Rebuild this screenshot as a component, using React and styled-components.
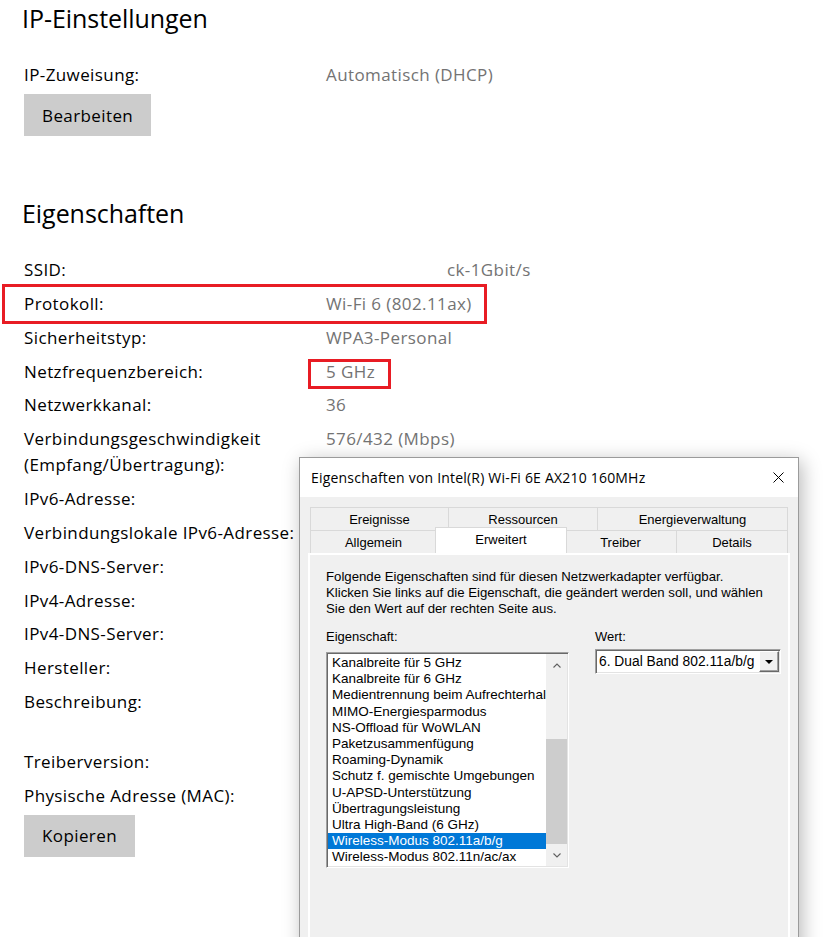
import React from "react";
import styled, { createGlobalStyle } from "styled-components";

const GlobalStyle = createGlobalStyle`
  html, body {
    margin: 0;
    padding: 0;
    background: #ffffff;
    overflow: hidden;
  }
  body {
    font-family: "Open Sans", "Noto Sans", sans-serif;
    color: #000;
  }
`;

/* ---------- settings page ---------- */

const Page = styled.div`
  position: relative;
  width: 823px;
  height: 937px;
  overflow: hidden;
  box-sizing: border-box;
  padding: 0 0 0 24px;
`;

const Section = styled.section`
  margin-top: ${(p) => p.$gap || 0}px;
`;

const SectionTitle = styled.h2`
  margin: 0 0 0 -2px;
  font-size: 25px;
  line-height: 36px;
  font-weight: 400;
  letter-spacing: -0.05px;
`;

const PropertyList = styled.div`
  display: flex;
  flex-direction: column;
  row-gap: 7.85px;
  margin-top: 26px;
`;

const Row = styled.div`
  position: relative;
  display: grid;
  grid-template-columns: 302px 1fr;
  min-height: ${(p) => (p.$lines || 1) * 26}px;
  font-size: 17px;
  line-height: 26px;
  letter-spacing: 0.4px;

  ${(p) =>
    p.$framed &&
    `
    &::after {
      content: "";
      position: absolute;
      left: -22px;
      top: -7px;
      width: 485px;
      height: 40px;
      box-sizing: border-box;
      border: 3px solid #e81c24;
    }
  `}
`;

const Label = styled.div`
  color: #000;
  white-space: nowrap;
`;

const Value = styled.div`
  color: #737373;
  padding-left: ${(p) => p.$indent || 0}px;
  white-space: nowrap;
`;

const FramedText = styled.span`
  position: relative;
  display: inline-block;

  &::after {
    content: "";
    position: absolute;
    left: -18px;
    top: 0;
    width: 83px;
    height: 30px;
    box-sizing: border-box;
    border: 3px solid #e81c24;
  }
`;

const FlatButton = styled.button`
  display: inline-flex;
  align-items: center;
  justify-content: center;
  height: 42px;
  margin-top: ${(p) => p.$gap || 0}px;
  padding: 0 18px;
  border: 0;
  background: #cccccc;
  color: #000;
  font-family: inherit;
  font-size: 17px;
  letter-spacing: 0.4px;
`;

/* ---------- adapter properties window ---------- */

const Window = styled.div`
  position: absolute;
  left: 299px;
  top: 457px;
  width: 500px;
  height: 520px;
  box-sizing: border-box;
  display: flex;
  flex-direction: column;
  border: 1px solid #9b9b9b;
  background: #f0f0f0;
  box-shadow: 3px 4px 18px rgba(0, 0, 0, 0.28);
  font-family: "Liberation Sans", Arial, sans-serif;
  font-size: 13px;
  color: #000;
`;

const TitleBar = styled.div`
  height: 39px;
  flex: none;
  display: flex;
  align-items: center;
  justify-content: space-between;
  padding-left: 11px;
  background: #ffffff;
`;

const Title = styled.span`
  font-family: "Open Sans", "Noto Sans", sans-serif;
  font-size: 14px;
  letter-spacing: 0.2px;
`;

const CloseButton = styled.button`
  width: 40px;
  height: 100%;
  padding: 0;
  border: 0;
  background: transparent;
  display: flex;
  align-items: center;
  justify-content: center;
`;

const WindowBody = styled.div`
  flex: 1;
  display: flex;
  flex-direction: column;
  padding: 10px 8px 0;
`;

const TabStrip = styled.div`
  margin: 0 2px;
  display: flex;
  flex-direction: column;
`;

const TabRow = styled.div`
  display: flex;
  height: 23px;
  border-left: 1px solid #d9d9d9;
`;

const Tab = styled.div`
  box-sizing: border-box;
  flex: none;
  width: ${(p) => p.$w + (p.$active ? 4 : 0)}px;
  height: ${(p) => (p.$active ? 26 : 23)}px;
  margin: ${(p) => (p.$active ? "-3px -2px 0" : "0")};
  padding-bottom: ${(p) => (p.$active ? 3 : 0)}px;
  display: flex;
  align-items: center;
  justify-content: center;
  border-top: 1px solid #d9d9d9;
  border-right: 1px solid #d9d9d9;
  border-left: ${(p) => (p.$active ? "1px solid #d9d9d9" : "0")};
  background: ${(p) => (p.$active ? "#ffffff" : "#f0f0f0")};
  position: relative;
  z-index: ${(p) => (p.$active ? 1 : 0)};
  white-space: nowrap;
`;

const TabPanel = styled.div`
  flex: 1;
  border: 2px solid #ffffff;
  border-bottom: 0;
  padding: 14px 16px 0;
  background: #f0f0f0;
`;

const Intro = styled.p`
  margin: 0;
  font-size: 13.2px;
  line-height: 16px;
  white-space: nowrap;
`;

const Columns = styled.div`
  display: flex;
  gap: 26px;
  margin-top: 12px;
`;

const Column = styled.div`
  width: ${(p) => p.$w}px;
  flex: none;
  display: flex;
  flex-direction: column;
`;

const FieldLabel = styled.div`
  line-height: 16px;
  margin-bottom: ${(p) => p.$gap}px;
`;

const Sunken = styled.div`
  box-sizing: border-box;
  border: 1px solid;
  border-color: #a0a0a0 #ffffff #ffffff #a0a0a0;
  box-shadow: inset 1px 1px 0 #696969, inset -1px -1px 0 #e3e3e3;
  background: #ffffff;
  padding: 1px;
`;

const ListBox = styled(Sunken)`
  height: 216px;
  display: flex;
`;

const Items = styled.div`
  flex: 1;
  min-width: 0;
  overflow: hidden;
  padding-top: 1px;
`;

const Item = styled.div`
  padding-left: 4px;
  font-size: 13.5px;
  line-height: 16.2px;
  height: 16.2px;
  white-space: nowrap;
  overflow: hidden;
  background: ${(p) => (p.$selected ? "#0078d7" : "transparent")};
  color: ${(p) => (p.$selected ? "#ffffff" : "#000000")};
`;

const ScrollBar = styled.div`
  width: 21px;
  flex: none;
  display: flex;
  flex-direction: column;
  background: #f0f0f0;
`;

const ScrollArrow = styled.div`
  height: ${(p) => p.$h}px;
  flex: none;
  display: flex;
  align-items: center;
  justify-content: center;
`;

const ScrollTrack = styled.div`
  flex: 1;
  display: flex;
  flex-direction: column;
  justify-content: flex-end;
`;

const ScrollThumb = styled.div`
  height: 105px;
  background: #cdcdcd;
`;

const ComboBox = styled(Sunken)`
  height: 25px;
  display: flex;
`;

const ComboText = styled.div`
  flex: 1;
  padding-left: 2px;
  font-size: 13.8px;
  line-height: 21px;
  white-space: nowrap;
  overflow: hidden;
`;

const ComboButton = styled.div`
  width: 20px;
  flex: none;
  box-sizing: border-box;
  display: flex;
  align-items: center;
  justify-content: center;
  background: #f0f0f0;
  border: 1px solid;
  border-color: #ffffff #696969 #696969 #ffffff;
  box-shadow: inset -1px -1px 0 #a0a0a0;
`;

/* ---------- small drawings ---------- */

const CloseIcon = () => (
  <svg width="11" height="11" viewBox="0 0 11 11">
    <path d="M0.5 0.5 L10.5 10.5 M10.5 0.5 L0.5 10.5" stroke="#000" strokeWidth="1" />
  </svg>
);

const Chevron = ({ up }) => (
  <svg width="8" height="5" viewBox="0 0 8 5">
    <polyline
      points={up ? "0.5,4.5 4,1 7.5,4.5" : "0.5,0.5 4,4 7.5,0.5"}
      fill="none"
      stroke="#606060"
      strokeWidth="1.1"
    />
  </svg>
);

const DropTriangle = () => (
  <svg width="8" height="4" viewBox="0 0 8 4">
    <polygon points="0,0 8,0 4,4" fill="#000" />
  </svg>
);

/* ---------- data ---------- */

const properties = [
  { label: "SSID:", value: "ck-1Gbit/s", indent: 121 },
  { label: "Protokoll:", value: "Wi-Fi 6 (802.11ax)", frameRow: true },
  { label: "Sicherheitstyp:", value: "WPA3-Personal" },
  { label: "Netzfrequenzbereich:", value: "5 GHz", frameValue: true },
  { label: "Netzwerkkanal:", value: "36" },
  {
    label: ["Verbindungsgeschwindigkeit", "(Empfang/Übertragung):"],
    value: "576/432 (Mbps)",
  },
  { label: "IPv6-Adresse:" },
  { label: "Verbindungslokale IPv6-Adresse:" },
  { label: "IPv6-DNS-Server:" },
  { label: "IPv4-Adresse:" },
  { label: "IPv4-DNS-Server:" },
  { label: "Hersteller:" },
  { label: "Beschreibung:", lines: 2 },
  { label: "Treiberversion:" },
  { label: "Physische Adresse (MAC):" },
];

const tabsTop = [
  { name: "Ereignisse", w: 138 },
  { name: "Ressourcen", w: 149 },
  { name: "Energieverwaltung", w: 190 },
];

const tabsBottom = [
  { name: "Allgemein", w: 126 },
  { name: "Erweitert", w: 128, active: true },
  { name: "Treiber", w: 112 },
  { name: "Details", w: 111 },
];

const adapterOptions = [
  "Kanalbreite für 5 GHz",
  "Kanalbreite für 6 GHz",
  "Medientrennung beim Aufrechterhal",
  "MIMO-Energiesparmodus",
  "NS-Offload für WoWLAN",
  "Paketzusammenfügung",
  "Roaming-Dynamik",
  "Schutz f. gemischte Umgebungen",
  "U-APSD-Unterstützung",
  "Übertragungsleistung",
  "Ultra High-Band (6 GHz)",
  "Wireless-Modus 802.11a/b/g",
  "Wireless-Modus 802.11n/ac/ax",
];

const selectedOption = "Wireless-Modus 802.11a/b/g";

/* ---------- components ---------- */

function PropertyRow({ item }) {
  const lines = Array.isArray(item.label) ? item.label : [item.label];
  return (
    <Row $framed={item.frameRow} $lines={item.lines}>
      <Label>
        {lines.map((l, i) => (
          <div key={i}>{l}</div>
        ))}
      </Label>
      <Value $indent={item.indent}>
        {item.frameValue ? <FramedText>{item.value}</FramedText> : item.value}
      </Value>
    </Row>
  );
}

function AdapterWindow() {
  return (
    <Window>
      <TitleBar>
        <Title>Eigenschaften von Intel(R) Wi-Fi 6E AX210 160MHz</Title>
        <CloseButton aria-label="Schließen">
          <CloseIcon />
        </CloseButton>
      </TitleBar>
      <WindowBody>
        <TabStrip>
          <TabRow>
            {tabsTop.map((t) => (
              <Tab key={t.name} $w={t.w}>
                {t.name}
              </Tab>
            ))}
          </TabRow>
          <TabRow>
            {tabsBottom.map((t) => (
              <Tab key={t.name} $w={t.w} $active={t.active}>
                {t.name}
              </Tab>
            ))}
          </TabRow>
        </TabStrip>
        <TabPanel>
          <Intro>
            Folgende Eigenschaften sind für diesen Netzwerkadapter verfügbar.
            <br />
            Klicken Sie links auf die Eigenschaft, die geändert werden soll, und wählen
            <br />
            Sie den Wert auf der rechten Seite aus.
          </Intro>
          <Columns>
            <Column $w={243}>
              <FieldLabel $gap={7}>Eigenschaft:</FieldLabel>
              <ListBox>
                <Items>
                  {adapterOptions.map((o) => (
                    <Item key={o} $selected={o === selectedOption}>
                      {o}
                    </Item>
                  ))}
                </Items>
                <ScrollBar>
                  <ScrollArrow $h={22}>
                    <Chevron up />
                  </ScrollArrow>
                  <ScrollTrack>
                    <ScrollThumb />
                  </ScrollTrack>
                  <ScrollArrow $h={22}>
                    <Chevron />
                  </ScrollArrow>
                </ScrollBar>
              </ListBox>
            </Column>
            <Column $w={186}>
              <FieldLabel $gap={4}>Wert:</FieldLabel>
              <ComboBox>
                <ComboText>6. Dual Band 802.11a/b/g</ComboText>
                <ComboButton>
                  <DropTriangle />
                </ComboButton>
              </ComboBox>
            </Column>
          </Columns>
        </TabPanel>
      </WindowBody>
    </Window>
  );
}

export default function App() {
  return (
    <>
      <GlobalStyle />
      <Page>
        <Section>
          <SectionTitle>IP-Einstellungen</SectionTitle>
          <PropertyList>
            <PropertyRow item={{ label: "IP-Zuweisung:", value: "Automatisch (DHCP)" }} />
          </PropertyList>
          <FlatButton $gap={6}>Bearbeiten</FlatButton>
        </Section>

        <Section $gap={59}>
          <SectionTitle>Eigenschaften</SectionTitle>
          <PropertyList>
            {properties.map((p, i) => (
              <PropertyRow key={i} item={p} />
            ))}
          </PropertyList>
          <FlatButton $gap={6}>Kopieren</FlatButton>
        </Section>

        <AdapterWindow />
      </Page>
    </>
  );
}
